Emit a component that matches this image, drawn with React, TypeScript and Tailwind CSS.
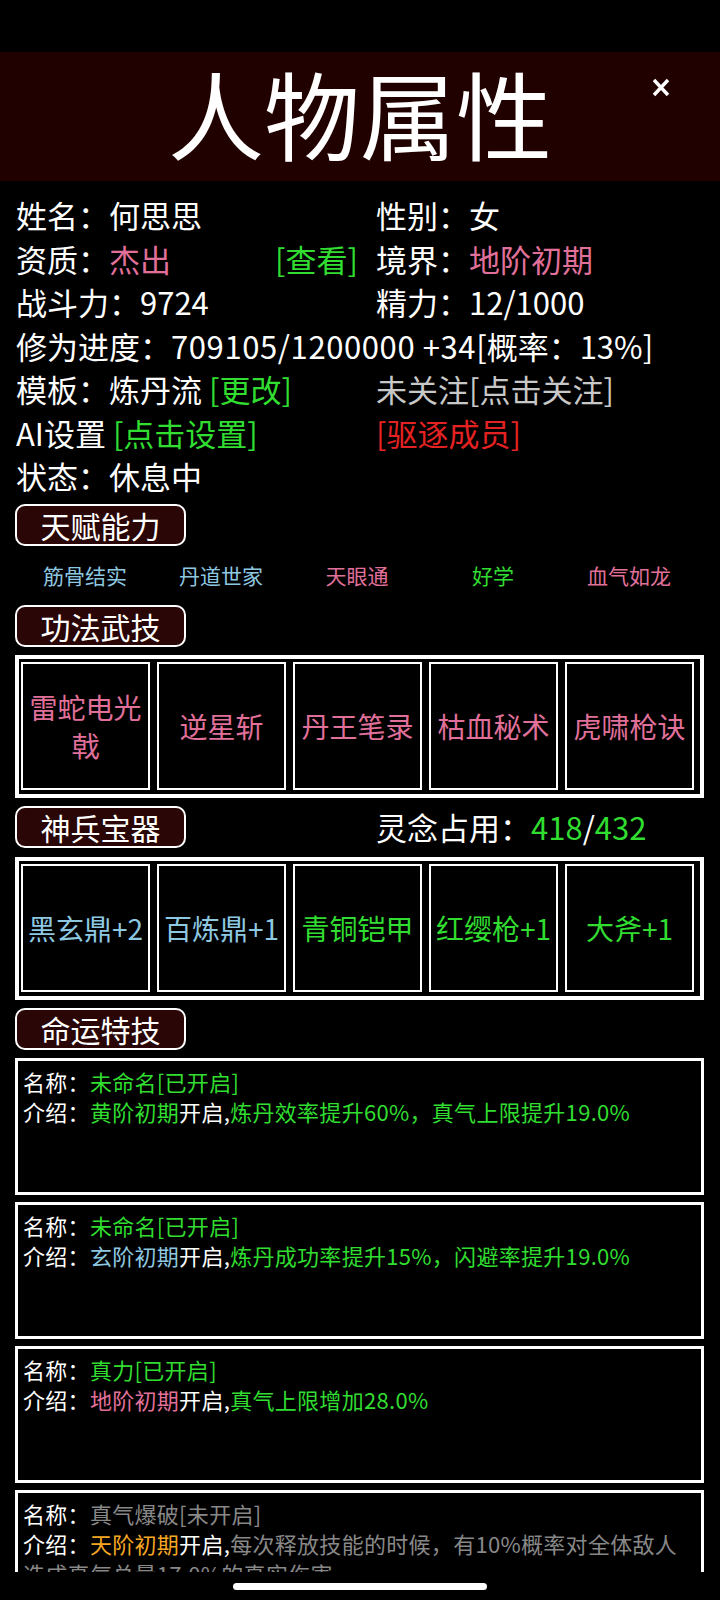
import React from "react";

const GREEN = "text-[#30dd30]";
const PINK = "text-[#e0709a]";
const BLUE = "text-[#8ec8e0]";

function Pill({ children }: { children: React.ReactNode }) {
  return (
    <div className="w-[171px] h-[42px] shrink-0 border-2 border-white rounded-[10px] bg-[#2a0606] flex items-center justify-center text-[30px] leading-none text-white">
      {children}
    </div>
  );
}

function Cell({ children, color }: { children: React.ReactNode; color: string }) {
  return (
    <div
      className={`w-[129px] h-[128px] shrink-0 border-2 border-white flex items-center justify-center text-center text-[28px] leading-[38px] px-[2px] ${color}`}
    >
      {children}
    </div>
  );
}

function Box({ items }: { items: { t: string; c: string }[] }) {
  return (
    <div className="w-[689px] h-[143px] border-[4px] border-white pl-[2px] pt-[3px] flex gap-[7px] overflow-hidden">
      {items.map((it, i) => (
        <Cell key={i} color={it.c}>
          {it.t}
        </Cell>
      ))}
    </div>
  );
}

function Card({
  name,
  nameColor,
  children,
}: {
  name: string;
  nameColor: string;
  children: React.ReactNode;
}) {
  return (
    <div className="w-[689px] h-[137px] shrink-0 border-[3px] border-white pl-[5px] pt-[5px] text-[22px] leading-[30px] tracking-[0.3px]">
      <div>
        <span className="text-white">名称：</span>
        <span className={nameColor}>{name}</span>
      </div>
      <div>{children}</div>
    </div>
  );
}

export default function App() {
  return (
    <div className="w-[720px] h-[1600px] bg-black text-white font-['Noto_Sans_CJK_SC','Noto_Sans',sans-serif] flex flex-col overflow-hidden">
      <div className="h-[52px] shrink-0" />
      <div className="h-[129px] shrink-0 bg-[#210000] relative flex items-center justify-center pb-[10px]">
        <span className="text-[96px] leading-none text-white">人物属性</span>
        <svg
          className="absolute left-[652px] top-[26px]"
          width="18"
          height="19"
          viewBox="0 0 18 19"
        >
          <path d="M2 2 L16 17 M16 2 L2 17" stroke="white" strokeWidth="3.4" strokeLinecap="butt" />
        </svg>
      </div>

      <div className="flex-1 min-h-0 overflow-hidden px-[15px]">
        <div className="pt-[12px] pl-[1px] grid grid-cols-[360px_1fr] text-[31px] leading-[43.5px] whitespace-nowrap">
          <div>姓名：何思思</div>
          <div>性别：女</div>

          <div className="flex">
            <span className="w-[259px]">
              资质：<span className={PINK}>杰出</span>
            </span>
            <span className={GREEN}>[查看]</span>
          </div>
          <div>
            境界：<span className={PINK}>地阶初期</span>
          </div>

          <div>战斗力：9724</div>
          <div>精力：12/1000</div>

          <div className="col-span-2">
            修为进度：<span className="tracking-[0.6px]">709105/1200000 +34</span>[概率：13%]
          </div>

          <div>
            模板：炼丹流 <span className={GREEN}>[更改]</span>
          </div>
          <div className="text-[#c8c8c8]">未关注[点击关注]</div>

          <div>
            AI设置 <span className={GREEN}>[点击设置]</span>
          </div>
          <div className="text-[#e52222]">[驱逐成员]</div>

          <div>状态：休息中</div>
        </div>

        <div className="mt-[6px]">
          <Pill>天赋能力</Pill>
        </div>

        <div className="h-[59px] pl-[2px] grid grid-cols-[repeat(5,136px)] items-center text-[21px] leading-none text-center">
          <span className={BLUE}>筋骨结实</span>
          <span className={BLUE}>丹道世家</span>
          <span className={PINK}>天眼通</span>
          <span className={GREEN}>好学</span>
          <span className={PINK}>血气如龙</span>
        </div>

        <Pill>功法武技</Pill>

        <div className="mt-[8px]">
          <Box
            items={[
              { t: "雷蛇电光戟", c: PINK },
              { t: "逆星斩", c: PINK },
              { t: "丹王笔录", c: PINK },
              { t: "枯血秘术", c: PINK },
              { t: "虎啸枪诀", c: PINK },
            ]}
          />
        </div>

        <div className="mt-[8px] flex items-center">
          <Pill>神兵宝器</Pill>
          <div className="ml-[190px] text-[31px] leading-none">
            灵念占用：<span className={GREEN}>418</span>/<span className={GREEN}>432</span>
          </div>
        </div>

        <div className="mt-[9px]">
          <Box
            items={[
              { t: "黑玄鼎+2", c: BLUE },
              { t: "百炼鼎+1", c: BLUE },
              { t: "青铜铠甲", c: GREEN },
              { t: "红缨枪+1", c: GREEN },
              { t: "大斧+1", c: GREEN },
            ]}
          />
        </div>

        <div className="mt-[8px]">
          <Pill>命运特技</Pill>
        </div>

        <div className="mt-[8px] flex flex-col gap-[7px]">
          <Card name="未命名[已开启]" nameColor={GREEN}>
            <span className="text-white">介绍：</span>
            <span className={GREEN}>黄阶初期</span>
            <span className="text-white">开启,</span>
            <span className={GREEN}>炼丹效率提升60%，真气上限提升19.0%</span>
          </Card>
          <Card name="未命名[已开启]" nameColor={GREEN}>
            <span className="text-white">介绍：</span>
            <span className={BLUE}>玄阶初期</span>
            <span className="text-white">开启,</span>
            <span className={GREEN}>炼丹成功率提升15%，闪避率提升19.0%</span>
          </Card>
          <Card name="真力[已开启]" nameColor={GREEN}>
            <span className="text-white">介绍：</span>
            <span className={PINK}>地阶初期</span>
            <span className="text-white">开启,</span>
            <span className={GREEN}>真气上限增加28.0%</span>
          </Card>
          <Card name="真气爆破[未开启]" nameColor="text-[#888888]">
            <span className="text-white">介绍：</span>
            <span className="text-[#f5a623]">天阶初期</span>
            <span className="text-white">开启,</span>
            <span className="text-[#888888]">
              每次释放技能的时候，有10%概率对全体敌人
              <br />
              造成真气总量17.0%的真实伤害
            </span>
          </Card>
        </div>
      </div>

      <div className="h-[28px] shrink-0 bg-black flex justify-center">
        <div className="mt-[11px] w-[254px] h-[7px] rounded-full bg-white" />
      </div>
    </div>
  );
}
